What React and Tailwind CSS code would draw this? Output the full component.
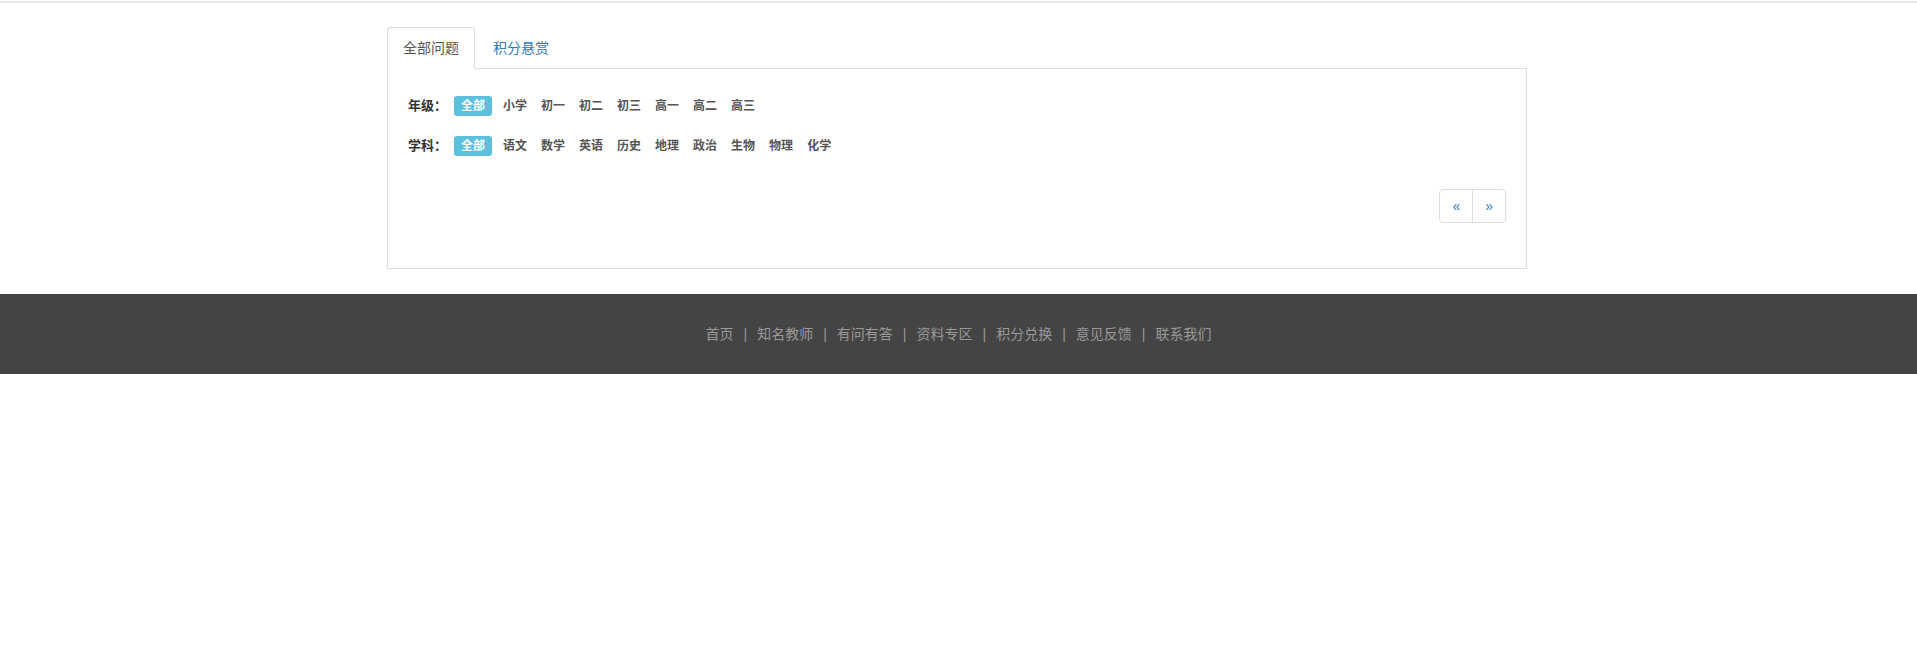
import React from "react";

const grades = ["小学", "初一", "初二", "初三", "高一", "高二", "高三"];
const subjects = ["语文", "数学", "英语", "历史", "地理", "政治", "生物", "物理", "化学"];
const links = ["首页", "知名教师", "有问有答", "资料专区", "积分兑换", "意见反馈", "联系我们"];

const font = { fontFamily: '"Liberation Sans", Arial, "Noto Sans CJK SC", sans-serif' };

const FilterRow = ({ label, items }) => (
  <div className="flex h-[20px] items-center">
    <span className="w-[46px] text-[13px] font-bold text-[#333]">{label}</span>
    <span className="flex h-[20px] w-[38px] items-center justify-center rounded-[3px] bg-[#5bc0de] text-[12px] font-bold text-white">
      全部
    </span>
    <div className="ml-[11px] flex gap-[14px] text-[12px] font-bold text-[#555]">
      {items.map((t) => (
        <span key={t}>{t}</span>
      ))}
    </div>
  </div>
);

export default function App() {
  return (
    <div className="min-h-[653px] bg-white text-[14px] leading-[20px]" style={font}>
      {/* top rule */}
      <div className="h-[3px] border-b-2 border-[#e7e7e7]" />

      <div className="pr-[3px]">
        <div className="mx-auto mt-[24px] w-[1140px]">
          {/* ── Tabs ── */}
          <div className="flex border-b border-[#ddd]">
            <div className="-mb-px rounded-t-[4px] border border-[#ddd] border-b-transparent bg-white px-[15px] py-[10px] text-[#555]">
              全部问题
            </div>
            <div className="-mb-px ml-[2px] rounded-t-[4px] border border-transparent px-[15px] py-[10px] text-[#337ab7]">
              积分悬赏
            </div>
          </div>

          {/* ── Panel ── */}
          <div className="border border-t-0 border-[#ddd] px-[20px] pb-[45px] pt-[27px]">
            <div className="flex flex-col gap-[20px]">
              <FilterRow label="年级：" items={grades} />
              <FilterRow label="学科：" items={subjects} />
            </div>

            <div className="mt-[33px] flex justify-end">
              <div className="flex">
                <span className="rounded-l-[4px] border border-[#ddd] px-[12px] py-[6px] text-[#337ab7]">«</span>
                <span className="-ml-px rounded-r-[4px] border border-[#ddd] px-[12px] py-[6px] text-[#337ab7]">»</span>
              </div>
            </div>
          </div>
        </div>
      </div>

      {/* ── Footer ── */}
      <div className="mt-[25px] flex h-[80px] items-center justify-center bg-[#444] text-[14px] text-[#999]">
        {links.map((l, i) => (
          <React.Fragment key={l}>
            {i > 0 && <span className="mx-[10px]">|</span>}
            <span>{l}</span>
          </React.Fragment>
        ))}
      </div>
    </div>
  );
}
